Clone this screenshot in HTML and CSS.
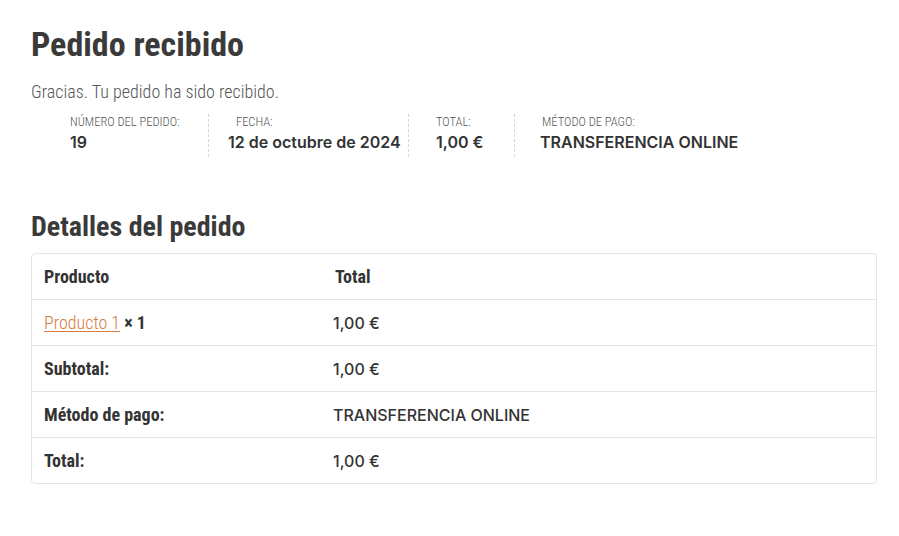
FILE: index.html
```html
<!DOCTYPE html>
<html lang="es">
<head>
<meta charset="utf-8">
<title>Pedido recibido</title>
<link rel="stylesheet" href="styles.css">
</head>
<body>
<main class="page">
  <h1 class="title">Pedido recibido</h1>
  <p class="thanks">Gracias. Tu pedido ha sido recibido.</p>
  <ul class="overview">
    <li class="ov ov-number"><span class="ov-label">Número del pedido:</span><strong class="ov-value">19</strong></li>
    <li class="ov ov-date"><span class="ov-label">Fecha:</span><strong class="ov-value">12 de octubre de 2024</strong></li>
    <li class="ov ov-total"><span class="ov-label">Total:</span><strong class="ov-value">1,00&nbsp;€</strong></li>
    <li class="ov ov-method"><span class="ov-label">Método de pago:</span><strong class="ov-value">TRANSFERENCIA ONLINE</strong></li>
  </ul>
  <h2 class="subtitle">Detalles del pedido</h2>
  <table class="details">
    <thead>
      <tr><th class="c1">Producto</th><th class="c2">Total</th></tr>
    </thead>
    <tbody>
      <tr><td class="c1"><a class="plink" href="#">Producto 1</a> <strong class="qty">×&nbsp;1</strong></td><td class="c2 val">1,00&nbsp;€</td></tr>
    </tbody>
    <tfoot>
      <tr><th class="c1">Subtotal:</th><td class="c2 val">1,00&nbsp;€</td></tr>
      <tr><th class="c1">Método de pago:</th><td class="c2 val">TRANSFERENCIA ONLINE</td></tr>
      <tr><th class="c1">Total:</th><td class="c2 val">1,00&nbsp;€</td></tr>
    </tfoot>
  </table>
</main>
</body>
</html>
```

FILE: styles.css
```css
html, body {
  margin: 0;
  padding: 0;
  background: #ffffff;
}

body {
  font-family: "Roboto Condensed", Roboto, "Liberation Sans Narrow", sans-serif;
  font-stretch: condensed;
  color: #333333;
}

.page {
  padding: 24px 22px 0 31px;
}

.title {
  margin: 0;
  font-size: 34px;
  line-height: 40px;
  font-weight: 700;
  color: #3a3a3a;
}

.thanks {
  margin: 16px 0 0;
  font-size: 18px;
  line-height: 24px;
  font-weight: 300;
  color: #555555;
}

.overview {
  list-style: none;
  margin: 10px 0 0;
  padding: 0 0 0 39px;
  display: flex;
}

.ov {
  display: flex;
  flex-direction: column;
  gap: 3px;
  padding-bottom: 5px;
  border-right: 1px dashed #d6d6d6;
  box-sizing: border-box;
}

.ov-number { width: 139px; }
.ov-date { width: 200px; padding-left: 19px; }
.ov-total { width: 106px; padding-left: 27px; }
.ov-method { border-right: 0; padding-left: 25px; }

.ov-date .ov-label { padding-left: 8px; }
.ov-method .ov-label { padding-left: 2px; }

.ov-label {
  font-size: 12.5px;
  line-height: 15px;
  font-weight: 300;
  text-transform: uppercase;
  color: #555555;
}

.ov-value {
  font-family: Inter, "Open Sans", sans-serif;
  font-stretch: normal;
  font-size: 16px;
  line-height: 20px;
  font-weight: 600;
  color: #333333;
}

.subtitle {
  margin: 54px 0 0;
  font-size: 28px;
  line-height: 32px;
  font-weight: 700;
  color: #3a3a3a;
}

.details {
  margin-top: 10px;
  width: 100%;
  border: 1px solid #e5e5e5;
  border-radius: 4px;
  border-collapse: separate;
  border-spacing: 0;
}

.details th,
.details td {
  height: 45px;
  padding: 0 12px;
  text-align: left;
  vertical-align: middle;
  border-top: 1px solid #e5e5e5;
  font-size: 18px;
  line-height: 20px;
}

.details thead th {
  border-top: 0;
}

.details th {
  font-weight: 700;
  color: #333333;
}

.details .c1 {
  width: 265px;
}

.details thead .c2 {
  padding-left: 14px;
}

.plink {
  color: #d67b45;
  font-weight: 300;
  text-decoration: underline;
  text-underline-offset: 2px;
}

.qty {
  font-weight: 700;
  color: #333333;
}

.details .val {
  font-family: Inter, "Open Sans", sans-serif;
  font-stretch: normal;
  font-size: 16px;
  font-weight: 500;
  color: #333333;
}
```
